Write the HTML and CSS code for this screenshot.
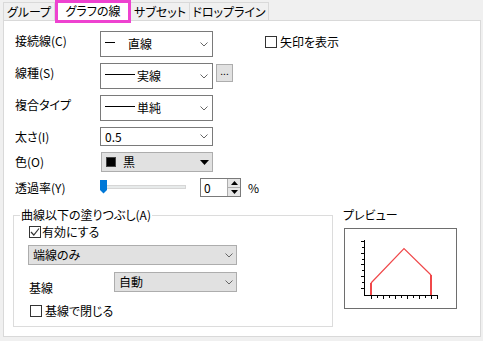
FILE: index.html
```html
<!DOCTYPE html>
<html lang="ja">
<head>
<meta charset="utf-8">
<title>グラフの線</title>
<link rel="stylesheet" href="styles.css">
</head>
<body>
<div class="tabbar">
  <div class="tab t1">グループ</div>
  <div class="tab sel">グラフの線</div>
  <div class="tab t3">サブセット</div>
  <div class="tab t4">ドロップライン</div>
</div>
<div class="panel">
  <div class="top">
    <div class="form">
      <div class="lbl hi">接続線(C)</div>
      <div class="combo tall"><span class="sample short"></span><span>直線</span><svg class="chev" width="8" height="5" viewBox="0 0 8 5"><polyline points="0.5,0.5 4,4 7.5,0.5" fill="none" stroke="#666" stroke-width="1"/></svg></div>

      <div class="lbl hi">線種(S)</div>
      <div class="ctlrow"><div class="combo tall"><span class="sample long"></span><span>実線</span><svg class="chev" width="8" height="5" viewBox="0 0 8 5"><polyline points="0.5,0.5 4,4 7.5,0.5" fill="none" stroke="#666" stroke-width="1"/></svg></div><div class="dots">...</div></div>

      <div class="lbl hi">複合タイプ</div>
      <div class="combo tall"><span class="sample long"></span><span>単純</span><svg class="chev" width="8" height="5" viewBox="0 0 8 5"><polyline points="0.5,0.5 4,4 7.5,0.5" fill="none" stroke="#666" stroke-width="1"/></svg></div>

      <div class="lbl">太さ(I)</div>
      <div class="combo short-h"><span>0.5</span><svg class="chev" width="8" height="5" viewBox="0 0 8 5"><polyline points="0.5,0.5 4,4 7.5,0.5" fill="none" stroke="#666" stroke-width="1"/></svg></div>

      <div class="lbl">色(O)</div>
      <div class="cbtn"><span class="swatch"></span><span class="cname">黒</span><svg class="tri" width="9" height="5" viewBox="0 0 9 5"><polygon points="0,0 9,0 4.5,5" fill="#000"/></svg></div>

      <div class="lbl">透過率(Y)</div>
      <div class="sliderrow">
        <svg class="slider" width="86" height="19" viewBox="0 0 86 19"><rect x="0.5" y="7.5" width="85" height="3" fill="#e7eaea" stroke="#d6d6d6"/><path d="M0 2 H7 V12 L3.5 15.5 L0 12 Z" fill="#0078d7"/></svg>
        <div class="spin"><span class="spinval">0</span><div class="spinbtns"><div class="sb"><svg width="7" height="4" viewBox="0 0 7 4"><polygon points="3.5,0 7,4 0,4" fill="#000"/></svg></div><div class="sb"><svg width="7" height="4" viewBox="0 0 7 4"><polygon points="0,0 7,0 3.5,4" fill="#000"/></svg></div></div></div>
        <span class="pct">%</span>
      </div>
    </div>
    <div class="chk arrowchk"><span class="box"></span><span>矢印を表示</span></div>
  </div>

  <div class="bottom">
    <fieldset class="fill">
      <legend>曲線以下の塗りつぶし(A)</legend>
      <div class="chk enable"><span class="box"><svg width="10" height="10" viewBox="0 0 10 10"><polyline points="1,5 3.8,8 9,1.5" fill="none" stroke="#333" stroke-width="1.2"/></svg></span><span>有効にする</span></div>
      <div class="dd wide"><span>端線のみ</span><svg class="chev" width="8" height="5" viewBox="0 0 8 5"><polyline points="0.5,0.5 4,4 7.5,0.5" fill="none" stroke="#666" stroke-width="1"/></svg></div>
      <div class="baserow">
        <div class="baselbl">基線</div>
        <div class="dd auto"><span>自動</span><svg class="chev" width="8" height="5" viewBox="0 0 8 5"><polyline points="0.5,0.5 4,4 7.5,0.5" fill="none" stroke="#666" stroke-width="1"/></svg></div>
      </div>
      <div class="chk closechk"><span class="box"></span><span>基線で閉じる</span></div>
    </fieldset>
    <div class="preview">
      <div class="plbl">プレビュー</div>
      <div class="pbox">
        <svg width="111" height="79" viewBox="0 0 111 79">
          <g stroke="#000" stroke-width="1" shape-rendering="crispEdges">
            <line x1="19.5" y1="11" x2="19.5" y2="67"/>
            <line x1="19" y1="66.5" x2="93" y2="66.5"/>
            <line x1="16" y1="12.5" x2="19" y2="12.5"/>
            <line x1="17" y1="18.5" x2="19" y2="18.5"/>
            <line x1="16" y1="24.5" x2="19" y2="24.5"/>
            <line x1="17" y1="30.5" x2="19" y2="30.5"/>
            <line x1="16" y1="35.5" x2="19" y2="35.5"/>
            <line x1="17" y1="41.5" x2="19" y2="41.5"/>
            <line x1="16" y1="47.5" x2="19" y2="47.5"/>
            <line x1="17" y1="53.5" x2="19" y2="53.5"/>
            <line x1="16" y1="59.5" x2="19" y2="59.5"/>
            <line x1="26.5" y1="67" x2="26.5" y2="70"/>
            <line x1="32.5" y1="67" x2="32.5" y2="69"/>
            <line x1="38.5" y1="67" x2="38.5" y2="70"/>
            <line x1="44.5" y1="67" x2="44.5" y2="69"/>
            <line x1="50.5" y1="67" x2="50.5" y2="70"/>
            <line x1="56.5" y1="67" x2="56.5" y2="69"/>
            <line x1="62.5" y1="67" x2="62.5" y2="70"/>
            <line x1="68.5" y1="67" x2="68.5" y2="69"/>
            <line x1="74.5" y1="67" x2="74.5" y2="70"/>
            <line x1="80.5" y1="67" x2="80.5" y2="69"/>
            <line x1="86.5" y1="67" x2="86.5" y2="70"/>
            <line x1="92.5" y1="67" x2="92.5" y2="70"/>
          </g>
          <polyline points="26,54 59,19.5 86,46" fill="none" stroke="#f0484a" stroke-width="1.2"/>
          <g stroke="#f0484a" stroke-width="2" shape-rendering="crispEdges">
            <line x1="26" y1="54" x2="26" y2="66"/>
            <line x1="86" y1="46" x2="86" y2="66"/>
          </g>
        </svg>
      </div>
    </div>
  </div>
</div>
</body>
</html>
```

FILE: styles.css
```css
html, body {
  margin: 0;
  padding: 0;
}
body {
  width: 483px;
  height: 341px;
  background: #f0f0f0;
  font-family: "Noto Sans CJK JP", "Noto Sans", sans-serif;
  font-size: 12px;
  line-height: 14px;
  color: #000;
  font-feature-settings: "palt";
  overflow: hidden;
}
.tabbar {
  display: flex;
  align-items: flex-end;
  height: 20px;
  padding-left: 3px;
}
.tab {
  box-sizing: border-box;
  height: 18px;
  display: flex;
  align-items: center;
  justify-content: center;
  background: #f0f0f0;
  border: 1px solid #d9d9d9;
  border-bottom: none;
}
.t1 { width: 52px; }
.t3 { width: 59px; border-left: none; }
.t4 { width: 79px; border-left: none; }
.sel {
  position: relative;
  z-index: 1;
  width: 76px;
  height: 23px;
  margin-bottom: -3px;
  background: #fff;
  border: 3px solid #ee42d0;
  padding-bottom: 2px;
}
.panel {
  box-sizing: border-box;
  width: 478px;
  height: 317px;
  margin-left: 3px;
  background: #fff;
  border: 1px solid #d9d9d9;
}
.top {
  display: flex;
  padding-left: 11px;
}
.form {
  display: grid;
  grid-template-columns: 85px 165px;
  row-gap: 6px;
  align-items: center;
  padding-top: 10px;
}
.lbl.hi { margin-bottom: 6px; }
.combo {
  box-sizing: border-box;
  width: 113px;
  display: flex;
  align-items: center;
  background: #fff;
  border: 1px solid #7a7a7a;
  padding: 0 4px 0 4px;
}
.combo.tall { height: 26px; }
.combo.short-h { height: 19px; }
.chev { margin-left: auto; }
.sample {
  display: block;
  height: 1px;
  background: #000;
  margin-bottom: 3px;
}
.sample.short { width: 10px; margin-right: 13px; }
.sample.long { width: 30px; margin-right: 2px; }
.ctlrow {
  display: flex;
  align-items: flex-start;
}
.dots {
  box-sizing: border-box;
  width: 17px;
  height: 18px;
  margin: 1px 0 0 3px;
  background: #e1e1e1;
  border: 1px solid #adadad;
  font-size: 10px;
  line-height: 12px;
  text-align: center;
}
.cbtn {
  box-sizing: border-box;
  width: 112px;
  height: 20px;
  margin-left: 1px;
  display: flex;
  align-items: center;
  background: #e1e1e1;
  border: 1px solid #adadad;
  padding: 0 3px 0 4px;
}
.swatch {
  box-sizing: border-box;
  width: 10px;
  height: 10px;
  background: #000;
  border: 1px solid #444;
}
.cname { margin-left: 7px; }
.tri { margin-left: auto; }
.sliderrow {
  display: flex;
  align-items: center;
  height: 19px;
}
.slider { display: block; }
.spin {
  box-sizing: border-box;
  display: flex;
  width: 41px;
  height: 19px;
  margin-left: 14px;
  border: 1px solid #7a7a7a;
}
.spinval {
  width: 23px;
  padding-left: 3px;
  line-height: 17px;
}
.spinbtns {
  display: flex;
  flex-direction: column;
  flex: 1;
  border-left: 1px solid #adadad;
}
.sb {
  flex: 1;
  display: flex;
  align-items: center;
  justify-content: center;
  background: #e6e6e6;
}
.sb + .sb { border-top: 1px solid #adadad; }
.pct { margin-left: 7px; }
.chk {
  display: flex;
  align-items: center;
  height: 14px;
}
.box {
  box-sizing: border-box;
  width: 12px;
  height: 12px;
  border: 1px solid #333;
  background: #fff;
  margin-right: 3px;
  display: flex;
  align-items: center;
  justify-content: center;
}
.arrowchk { margin-top: 14px; }
.bottom {
  display: flex;
  align-items: flex-start;
  padding-left: 9px;
  margin-top: 11px;
}
.fill {
  box-sizing: border-box;
  width: 320px;
  height: 119px;
  margin: 0;
  min-width: 0;
  padding: 3px 14px 0 14px;
  border: 1px solid #dcdcdc;
}
.fill legend {
  padding: 0 1px;
  margin-left: -8px;
  line-height: 14px;
}
.enable .box { margin-left: 1px; margin-right: 1px; }
.dd {
  box-sizing: border-box;
  height: 20px;
  display: flex;
  align-items: center;
  background: #e1e1e1;
  border: 1px solid #adadad;
  padding: 0 3px 0 4px;
}
.dd.wide { width: 209px; margin-top: 6px; }
.baserow {
  display: flex;
  align-items: flex-start;
  margin-top: 7px;
}
.baselbl {
  width: 85px;
  padding: 9px 0 0 1px;
}
.dd.auto { width: 123px; }
.closechk { margin-top: 9px; }
.closechk .box { margin-left: 2px; }
.preview { margin-left: 10px; }
.plbl { line-height: 14px; }
.pbox {
  box-sizing: border-box;
  width: 113px;
  height: 81px;
  margin: 6px 0 0 1px;
  border: 1px solid #6e6e6e;
}
.pbox svg { display: block; }
```
